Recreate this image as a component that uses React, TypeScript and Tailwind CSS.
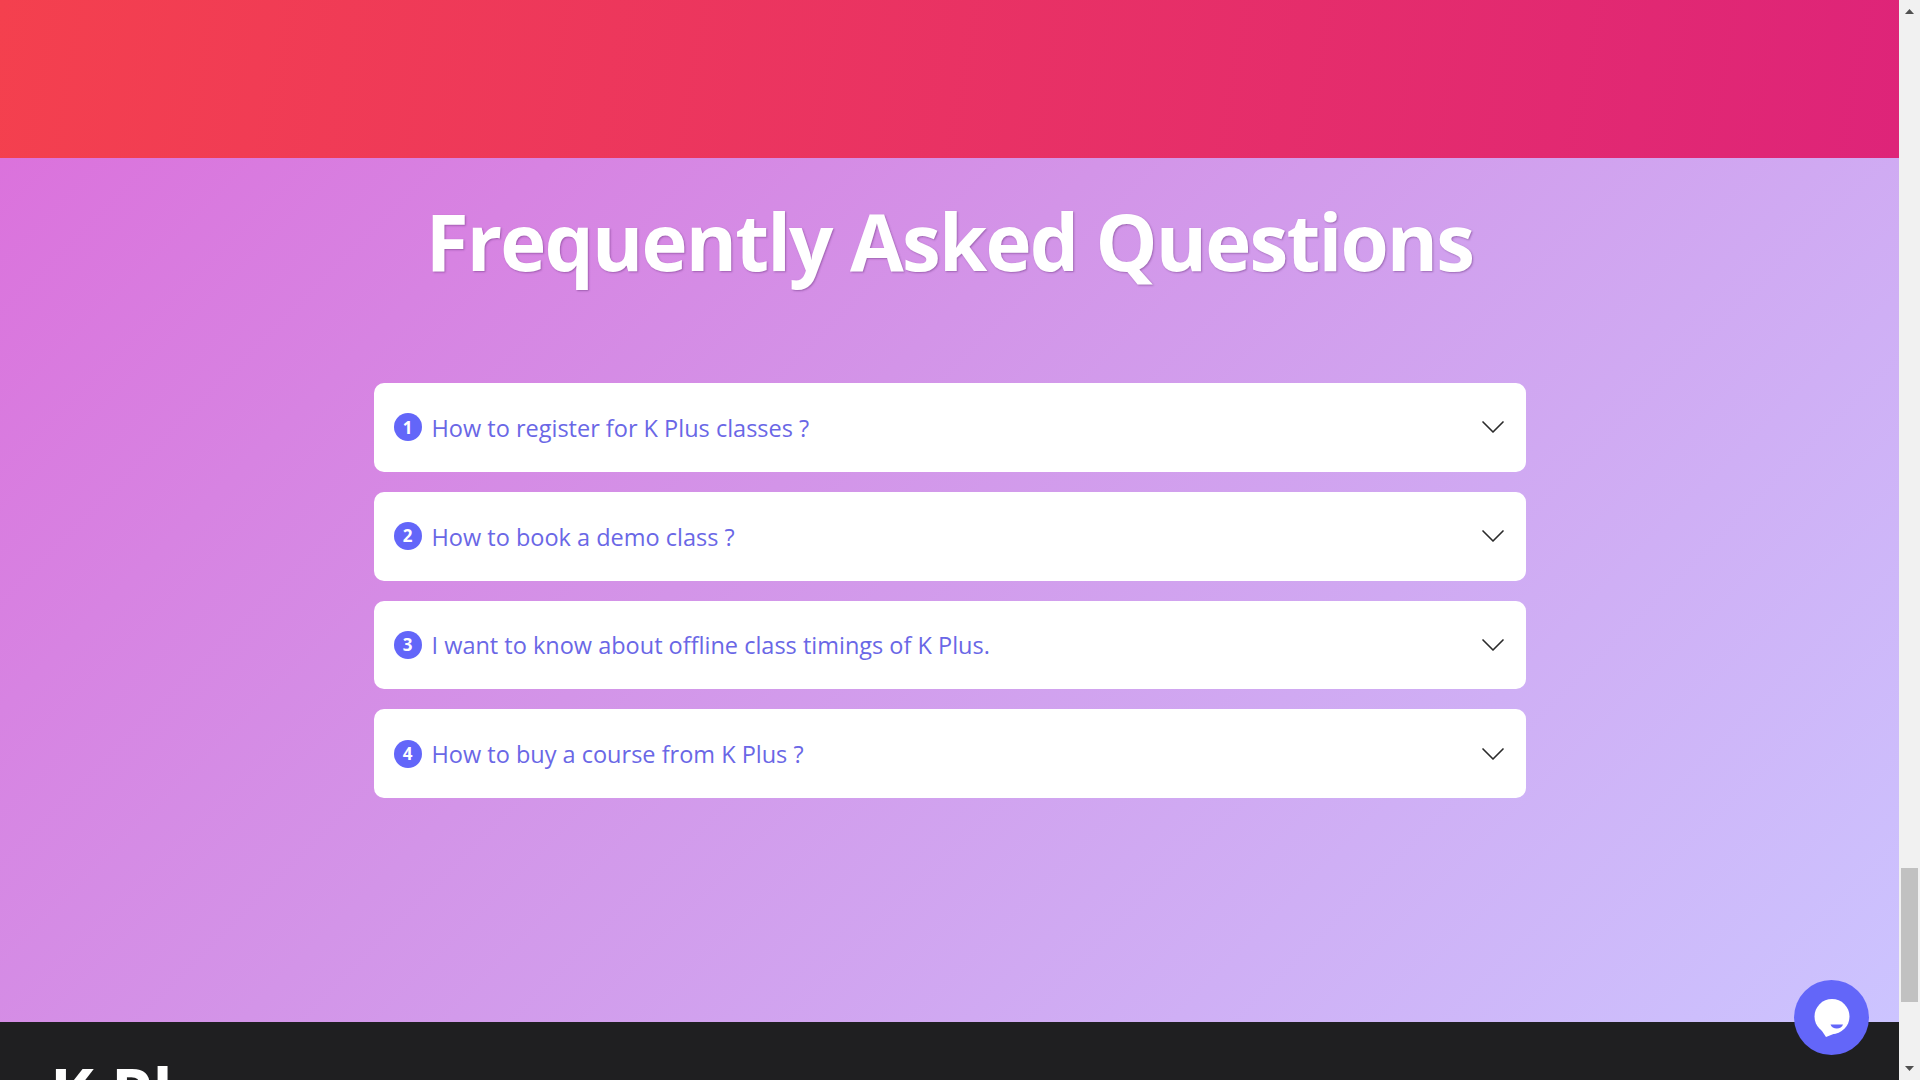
import { ChevronDown } from "lucide-react";

const faqs = [
  "How to register for K Plus classes ?",
  "How to book a demo class ?",
  "I want to know about offline class timings of K Plus.",
  "How to buy a course from K Plus ?",
];

const Scrollbar = () => (
  <aside className="flex h-screen w-[21px] shrink-0 flex-col items-center bg-[#f1f1f1] py-[9px]">
    <svg width="9" height="5" viewBox="0 0 9 5" className="fill-[#505050]">
      <path d="M4.5 0 9 5H0z" />
    </svg>
    <div className="mt-[854px] h-[134px] w-[17px] bg-[#c1c1c1]" />
    <svg width="9" height="5" viewBox="0 0 9 5" className="mt-auto fill-[#505050]">
      <path d="M0 0h9L4.5 5z" />
    </svg>
  </aside>
);

const ChatButton = () => (
  <button className="absolute bottom-[25px] right-[51px] flex h-[75px] w-[75px] items-center justify-center rounded-full bg-[#6366f9]">
    <svg width="36" height="38" viewBox="0 0 36 38">
      <circle cx="18" cy="17.500" r="17.500" fill="#ffffff" />
      <path d="M6 29 12 38l10-4z" fill="#ffffff" />
      <path d="M16.500 25.500h12.500c-.8 2.400-3.200 4-6.200 4s-5.500-1.600-6.300-4z" fill="#6366f9" />
    </svg>
  </button>
);

export default function App() {
  return (
    <div className="relative flex h-screen overflow-hidden font-['Open_Sans','Noto_Sans',sans-serif]">
      <main className="min-w-0 flex-1">
        <div className="h-[158px] bg-[linear-gradient(100deg,#f4404e,#de2479)]" />

        <section className="flex h-[864px] flex-col items-center bg-[linear-gradient(135deg,#db72dc_0%,#d394e8_40%,#ccc4ff_100%)] pt-[38px]">
          <h2 className="text-[78px] font-bold leading-[90px] tracking-[-1.85px] text-white [text-shadow:1px_1px_2px_rgba(90,40,110,0.45)]">
            Frequently Asked Questions
          </h2>

          <div className="mt-[97px] flex w-[1152px] flex-col gap-5">
            {faqs.map((question, index) => (
              <div
                key={question}
                className="flex h-[88.8px] items-center justify-between rounded-[10px] bg-white pl-5 pr-[13px]"
              >
                <div className="flex items-center gap-[10px]">
                  <span className="flex h-7 w-7 items-center justify-center rounded-full bg-[#6366f9] text-[17px] font-bold text-white">
                    {index + 1}
                  </span>
                  <span className="pt-[2px] text-[23.5px] font-medium text-[#6a67e6]">{question}</span>
                </div>
                <ChevronDown className="h-10 w-10 text-[#2b2b2b]" strokeWidth={1} />
              </div>
            ))}
          </div>
        </section>

        <footer className="h-[200px] bg-[#1f1f21] pl-[50px] pt-[34px]">
          <h3 className="text-[66px] font-bold leading-[70px] text-white">K Plus</h3>
        </footer>
      </main>

      <Scrollbar />
      <ChatButton />
    </div>
  );
}
